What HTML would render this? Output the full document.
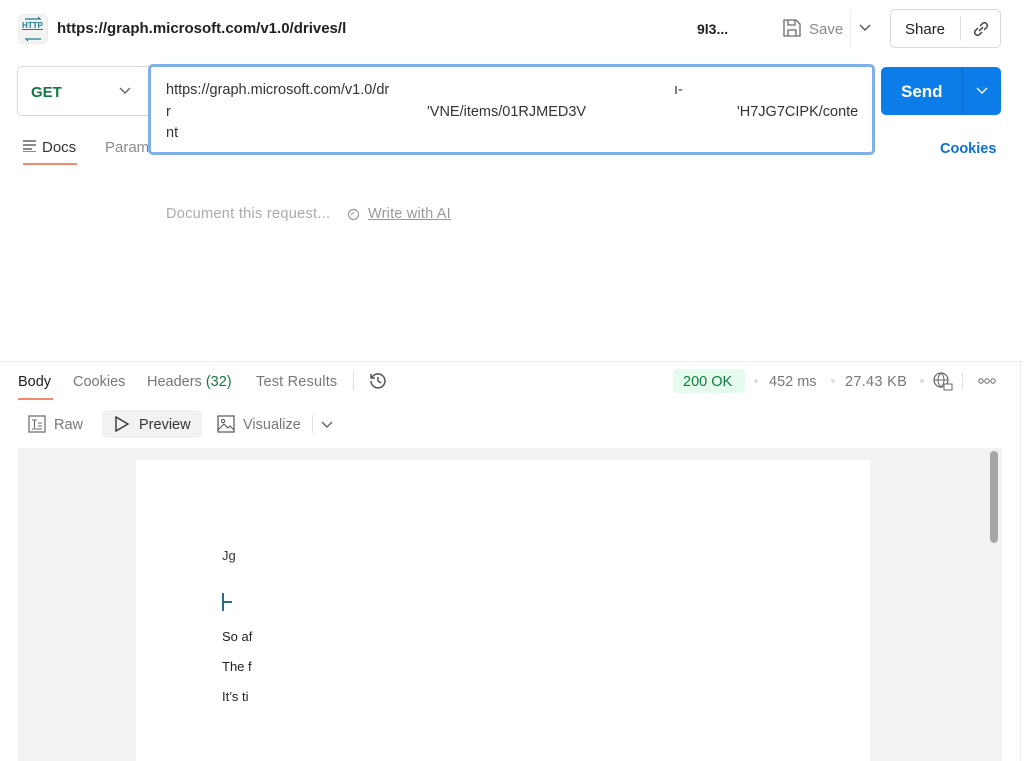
<!DOCTYPE html>
<html><head><meta charset="utf-8">
<style>
*{box-sizing:border-box;margin:0;padding:0}
body{width:1024px;height:761px;overflow:hidden;background:#fff;font-family:"Liberation Sans",sans-serif;color:#212121;position:relative}
.a{position:absolute;white-space:nowrap}
</style></head><body>
<div class="a" style="left:18px;top:14px;width:30px;height:30px;border-radius:5px;background:#f3f3f3;border:1px solid #ececec"></div>
<div class="a" style="left:22px;top:21px;font-size:8px;color:#1e7a8c;font-weight:bold;text-decoration:underline">HTTP</div>
<svg class="a" style="left:21px;top:16px" width="24" height="26"><path d="M4 3h15l-2-2M20 23H5l2 2" stroke="#1e7a8c" fill="none" stroke-width="1.2"/></svg>
<div class="a" style="left:57px;top:20px;font-size:15px;font-weight:bold;color:#212121">https://graph.microsoft.com/v1.0/drives/l</div>
<div class="a" style="left:697px;top:21px;font-size:14px;font-weight:bold">9l3...</div>
<svg class="a" style="left:782px;top:18px" width="20" height="20"><path d="M2 2h12l4 4v12H2z M6 2v5h7V2 M6 18v-6h8v6" stroke="#6b6b6b" fill="none" stroke-width="1.3"/></svg>
<div class="a" style="left:809px;top:21px;font-size:15px;color:#8a8a8a">Save</div>
<div class="a" style="left:850px;top:10px;width:1px;height:38px;background:#ececec"></div>
<svg class="a" style="left:859px;top:24px" width="12" height="8"><path d="M1 1l5 5 5-5" stroke="#555" fill="none" stroke-width="1.4"/></svg>
<div class="a" style="left:890px;top:9px;width:111px;height:39px;border:1px solid #d9d9d9;border-radius:5px"></div>
<div class="a" style="left:905px;top:21px;font-size:15px">Share</div>
<div class="a" style="left:960px;top:16px;width:1px;height:25px;background:#ddd"></div>
<svg class="a" style="left:970px;top:18px" width="22" height="22"><path d="M9 13l4-4 M8 10l-3 3a3 3 0 0 0 4 4l3-3 M14 12l3-3a3 3 0 0 0-4-4l-3 3" stroke="#444" fill="none" stroke-width="1.5"/></svg>
<div class="a" style="left:17px;top:66px;width:140px;height:50px;border:1px solid #d9d9d9;border-radius:5px 0 0 5px"></div>
<div class="a" style="left:31px;top:84px;font-size:15px;font-weight:bold;color:#0f7b3e">GET</div>
<svg class="a" style="left:119px;top:87px" width="12" height="8"><path d="M1 1l5 5 5-5" stroke="#666" fill="none" stroke-width="1.4"/></svg>
<div class="a" style="left:148px;top:64px;width:727px;height:91px;border:3px solid #7fb0ec;border-radius:5px;background:#fff"></div>
<div class="a" style="left:166px;top:80px;font-size:14.5px;line-height:21.5px;color:#333;width:700px"><span>https://graph.microsoft.com/v1.0/dr</span><span class="a" style="left:508px;top:0">ı-</span><br>r<span class="a" style="left:261px;top:21.5px">'VNE/items/01RJMED3V</span><span class="a" style="left:571px;top:21.5px">'H7JG7CIPK/conte</span><br>nt</div>
<div class="a" style="left:881px;top:67px;width:120px;height:48px;background:#0c7de8;border-radius:5px"></div>
<div class="a" style="left:962px;top:67px;width:1px;height:48px;background:#0a6bc6"></div>
<div class="a" style="left:901px;top:82px;font-size:17px;font-weight:bold;color:#fff">Send</div>
<svg class="a" style="left:976px;top:87px" width="12" height="8"><path d="M1 1l5 5 5-5" stroke="#fff" fill="none" stroke-width="1.4"/></svg>
<svg class="a" style="left:23px;top:140px" width="14" height="12"><path d="M0 1h13M0 5h13M0 9h9M0 12h13" stroke="#444" stroke-width="1.3"/></svg>
<div class="a" style="left:42px;top:139px;font-size:15px;color:#333">Docs</div>
<div class="a" style="left:23px;top:163px;width:54px;height:2px;background:#f08a6a"></div>
<div class="a" style="left:105px;top:139px;font-size:15px;color:#8a8a8a">Param</div>
<div class="a" style="left:940px;top:141px;font-size:14.5px;font-weight:bold;color:#0c6fd1">Cookies</div>
<div class="a" style="left:166px;top:206px;font-size:14.5px;color:#aaa;letter-spacing:0.3px">Document this request...</div>
<svg class="a" style="left:346px;top:207px" width="14" height="14"><circle cx="7.5" cy="7.5" r="5" stroke="#999" fill="none" stroke-width="1.2"/><path d="M5 8l3-3" stroke="#999"/></svg>
<div class="a" style="left:368px;top:206px;font-size:14.5px;color:#999;text-decoration:underline;letter-spacing:0.2px">Write with AI</div>
<div class="a" style="left:0;top:361px;width:1024px;height:1px;background:#ececec"></div>
<div class="a" style="left:1020px;top:361px;width:1px;height:400px;background:#ececec"></div>
<div class="a" style="left:18px;top:374px;font-size:14.5px;color:#212121">Body</div>
<div class="a" style="left:18px;top:398px;width:35px;height:2px;background:#f08a6a"></div>
<div class="a" style="left:73px;top:374px;font-size:14.5px;color:#777">Cookies</div>
<div class="a" style="left:147px;top:374px;font-size:14.5px;color:#777">Headers <span style="color:#0f7b3e">(32)</span></div>
<div class="a" style="left:256px;top:374px;font-size:14.5px;color:#777;letter-spacing:0.2px">Test Results</div>
<div class="a" style="left:353px;top:372px;width:1px;height:18px;background:#ddd"></div>
<svg class="a" style="left:367px;top:370px" width="22" height="22"><path d="M4 11a7 7 0 1 0 2-5L4 8M4 4v4h4M11 7v4l3 2" stroke="#555" fill="none" stroke-width="1.5"/></svg>
<div class="a" style="left:673px;top:369px;width:72px;height:24px;background:#e5fbee;border-radius:4px"></div>
<div class="a" style="left:683px;top:374px;font-size:14.5px;color:#0f7b3e">200 OK</div>
<div class="a" style="left:754px;top:379px;width:4px;height:4px;border-radius:2px;background:#ddd"></div>
<div class="a" style="left:769px;top:374px;font-size:14.5px;color:#777">452 ms</div>
<div class="a" style="left:831px;top:379px;width:4px;height:4px;border-radius:2px;background:#ddd"></div>
<div class="a" style="left:845px;top:374px;font-size:14.5px;color:#777;letter-spacing:0.3px">27.43 KB</div>
<div class="a" style="left:920px;top:379px;width:4px;height:4px;border-radius:2px;background:#ddd"></div>
<svg class="a" style="left:933px;top:372px" width="20" height="19"><circle cx="8" cy="8" r="7" stroke="#666" fill="none" stroke-width="1.2"/><path d="M1 8h14M8 1c-4 4-4 10 0 14M8 1c4 4 4 10 0 14" stroke="#666" fill="none"/><rect x="11" y="12" width="8" height="6" fill="#fff" stroke="#666"/></svg>
<div class="a" style="left:962px;top:373px;width:1px;height:17px;background:#e0e0e0"></div>
<svg class="a" style="left:978px;top:377px" width="18" height="8"><circle cx="3" cy="4" r="2.2" stroke="#666" fill="none"/><circle cx="9" cy="4" r="2.2" stroke="#666" fill="none"/><circle cx="15" cy="4" r="2.2" stroke="#666" fill="none"/></svg>
<svg class="a" style="left:28px;top:415px" width="18" height="18"><rect x="1" y="1" width="16" height="16" stroke="#666" fill="none" stroke-width="1.2"/><path d="M4 5h5M6.5 5v8M10 8h4M10 11h4M4 14h10" stroke="#666"/></svg>
<div class="a" style="left:54px;top:417px;font-size:14.5px;color:#777">Raw</div>
<div class="a" style="left:102px;top:410px;width:100px;height:28px;background:#f2f2f2;border-radius:4px"></div>
<svg class="a" style="left:114px;top:416px" width="16" height="16"><path d="M2 1l12 7-12 7z" stroke="#333" fill="none" stroke-width="1.4"/></svg>
<div class="a" style="left:139px;top:417px;font-size:14.5px;color:#333">Preview</div>
<svg class="a" style="left:217px;top:415px" width="18" height="18"><rect x="1" y="1" width="16" height="16" stroke="#555" fill="none" stroke-width="1.2"/><circle cx="6" cy="6" r="1.6" stroke="#555" fill="none"/><path d="M1 15l6-6 4 4 2-2 4 4" stroke="#555" fill="none"/></svg>
<div class="a" style="left:243px;top:417px;font-size:14.5px;color:#777">Visualize</div>
<div class="a" style="left:312px;top:415px;width:1px;height:18px;background:#e0e0e0"></div>
<svg class="a" style="left:321px;top:421px" width="12" height="8"><path d="M1 1l5 5 5-5" stroke="#666" fill="none" stroke-width="1.4"/></svg>
<div class="a" style="left:18px;top:448px;width:984px;height:313px;background:#f2f2f2"></div>
<div class="a" style="left:136px;top:460px;width:734px;height:301px;background:#fff"></div>
<div class="a" style="left:990px;top:451px;width:8px;height:92px;border-radius:4px;background:#a6a6a6"></div>
<div class="a" style="left:222px;top:548px;font-size:13px;color:#333">Jg</div>
<div class="a" style="left:222px;top:593px;width:2px;height:18px;background:#2d6b8a"></div>
<div class="a" style="left:222px;top:601px;width:10px;height:2px;background:#2d6b8a"></div>
<div class="a" style="left:222px;top:629px;font-size:13px;color:#222">So af</div>
<div class="a" style="left:222px;top:659px;font-size:13px;color:#222">The f</div>
<div class="a" style="left:222px;top:689px;font-size:13px;color:#222">It’s ti</div>
</body></html>
